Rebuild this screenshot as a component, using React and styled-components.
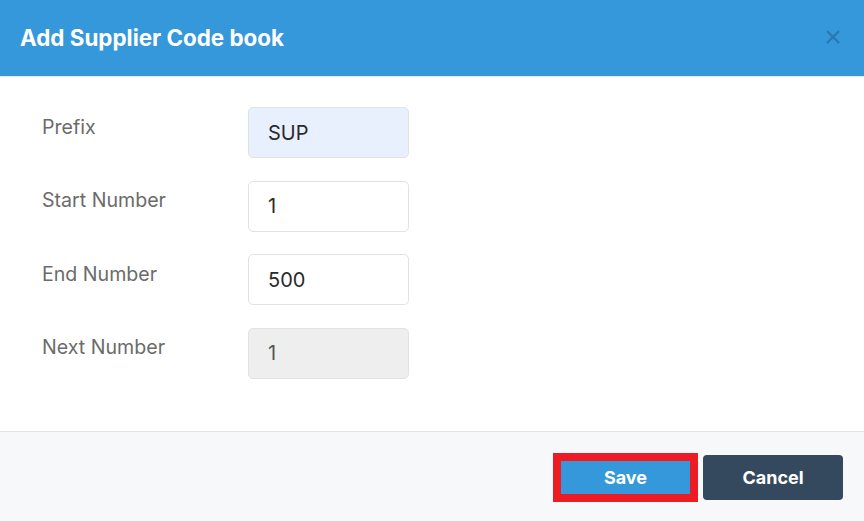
import React from "react";
import styled, { createGlobalStyle } from "styled-components";

const Global = createGlobalStyle`
  html, body { margin: 0; padding: 0; background: #ffffff; }
  body { font-family: Inter, "Noto Sans", sans-serif; }
  * { box-sizing: border-box; }
`;

const Modal = styled.div`
  width: 864px;
  height: 521px;
  display: flex;
  flex-direction: column;
  background: #ffffff;
`;

const Header = styled.div`
  height: 77px;
  flex: none;
  background: #3498db;
  border-bottom: 1px solid #e6e9ec;
  display: flex;
  align-items: center;
  justify-content: space-between;
  padding: 0 22px 2px 20px;
`;

const Title = styled.h2`
  margin: 0;
  font-family: Inter, sans-serif;
  font-weight: 700;
  font-size: 22.4px;
  color: #ffffff;
`;

const Close = styled.button`
  border: 0;
  background: transparent;
  padding: 0;
  width: 18px;
  height: 18px;
  display: flex;
  align-items: center;
  justify-content: center;
  cursor: pointer;
`;

const Body = styled.div`
  flex: 1;
  display: flex;
  flex-direction: column;
  gap: 22.5px;
  padding: 30px 0 0 42px;
`;

const Row = styled.div`
  display: flex;
  align-items: flex-start;
`;

const Label = styled.label`
  width: 206px;
  padding-top: 7.5px;
  font-family: Inter, sans-serif;
  font-size: 19.6px;
  color: #6b6b6b;
`;

const Input = styled.div`
  width: 161px;
  height: 51px;
  border: 1px solid #e2e2e2;
  border-radius: 5px;
  background: ${(p) => p.$bg || "#ffffff"};
  display: flex;
  align-items: center;
  padding: 0 19px;
  font-family: Inter, sans-serif;
  font-size: 20px;
  color: ${(p) => (p.$dim ? "#555" : "#2a2a2a")};
`;

const Footer = styled.div`
  height: 90px;
  flex: none;
  background: #f7f8fa;
  border-top: 1px solid #e2e4e7;
  display: flex;
  align-items: center;
  justify-content: flex-end;
  gap: 5px;
  padding: 1px 21px 0 0;
`;

const Button = styled.button`
  font-family: Inter, sans-serif;
  font-weight: 700;
  font-size: 18px;
  color: #ffffff;
  background: ${(p) => p.$bg};
  border: ${(p) => (p.$highlight ? "8px solid #ed1c24" : "0")};
  border-radius: ${(p) => (p.$highlight ? "0" : "4px")};
  width: ${(p) => p.$w}px;
  height: ${(p) => p.$h}px;
  padding: 0;
  display: flex;
  align-items: center;
  justify-content: center;
  cursor: pointer;
`;

const rows = [
  { label: "Prefix", value: "SUP", bg: "#e8f0fe" },
  { label: "Start Number", value: "1" },
  { label: "End Number", value: "500" },
  { label: "Next Number", value: "1", bg: "#eeeeee", dim: true },
];

export default function App() {
  return (
    <>
      <Global />
      <Modal>
        <Header>
          <Title>Add Supplier Code book</Title>
          <Close aria-label="Close">
            <svg width="16" height="16" viewBox="0 0 16 16">
              <path d="M2 2 L14 14 M14 2 L2 14" stroke="#2a78b3" strokeWidth="2.4" strokeLinecap="butt" />
            </svg>
          </Close>
        </Header>
        <Body>
          {rows.map((r) => (
            <Row key={r.label}>
              <Label>{r.label}</Label>
              <Input $bg={r.bg} $dim={r.dim}>{r.value}</Input>
            </Row>
          ))}
        </Body>
        <Footer>
          <Button $bg="#3498db" $highlight $w={145} $h={49}>Save</Button>
          <Button $bg="#34495e" $w={140} $h={45}>Cancel</Button>
        </Footer>
      </Modal>
    </>
  );
}
